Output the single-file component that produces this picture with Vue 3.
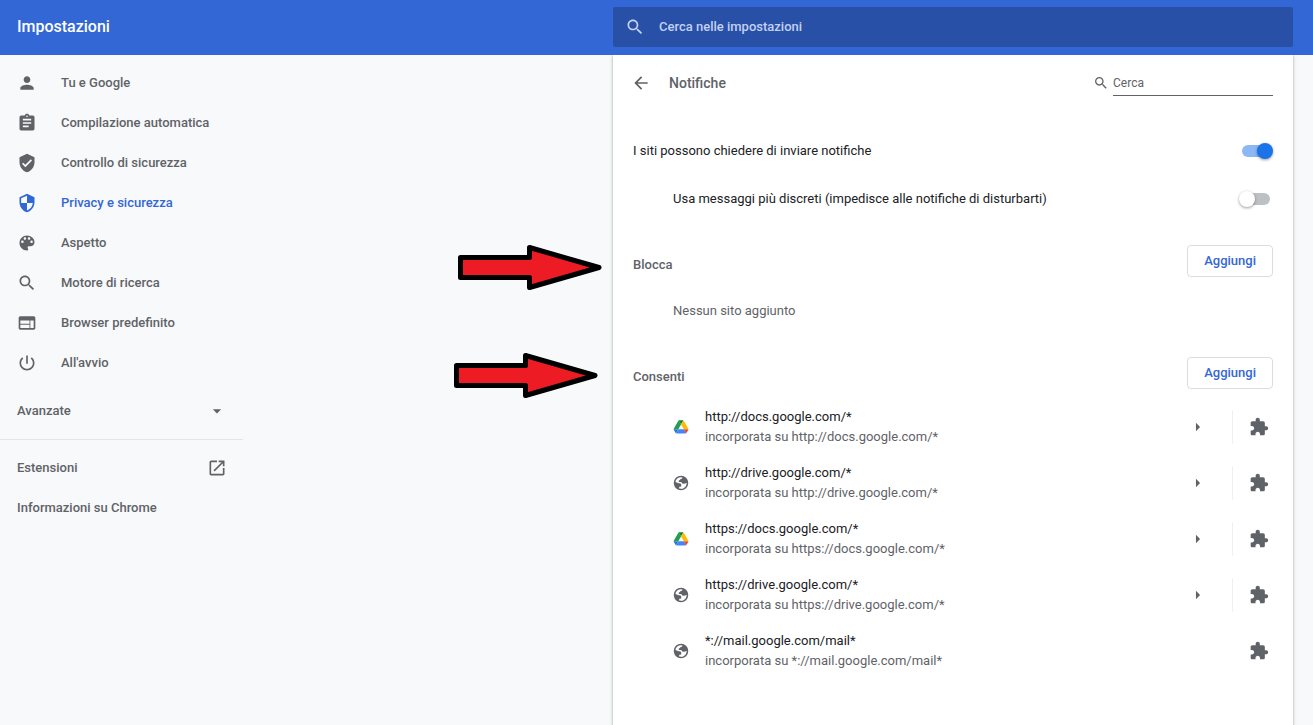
<script setup>
import { ref } from 'vue';

const icons = {
    person: 'M12 12c2.21 0 4-1.79 4-4s-1.79-4-4-4-4 1.79-4 4 1.79 4 4 4zm0 2c-2.67 0-8 1.34-8 4v2h16v-2c0-2.66-5.33-4-8-4z',
    assignment: 'M19 3h-4.18C14.4 1.84 13.3 1 12 1c-1.3 0-2.4.84-2.82 2H5c-1.1 0-2 .9-2 2v14c0 1.1.9 2 2 2h14c1.1 0 2-.9 2-2V5c0-1.1-.9-2-2-2zm-7 0c.55 0 1 .45 1 1s-.45 1-1 1-1-.45-1-1 .45-1 1-1zm2 14H7v-2h7v2zm3-4H7v-2h10v2zm0-4H7V7h10v2z',
    verified: 'M12 1L3 5v6c0 5.55 3.84 10.74 9 12 5.16-1.26 9-6.45 9-12V5l-9-4zm-2 16l-4-4 1.41-1.41L10 14.17l6.59-6.59L18 9l-8 8z',
    security: 'M12 1L3 5v6c0 5.55 3.84 10.74 9 12 5.16-1.26 9-6.45 9-12V5l-9-4zm0 10.99h7c-.53 4.12-3.28 7.79-7 8.94V12H5V6.3l7-3.11v8.8z',
    palette: 'M12 3c-4.97 0-9 4.03-9 9s4.03 9 9 9c.83 0 1.5-.67 1.5-1.5 0-.39-.15-.74-.39-1.01-.23-.26-.38-.61-.38-.99 0-.83.67-1.5 1.5-1.5H16c2.76 0 5-2.24 5-5 0-4.42-4.03-8-9-8zm-5.5 9c-.83 0-1.5-.67-1.5-1.5S5.67 9 6.5 9 8 9.67 8 10.5 7.33 12 6.5 12zm3-4C8.67 8 8 7.33 8 6.5S8.67 5 9.5 5s1.5.67 1.5 1.5S10.33 8 9.5 8zm5 0c-.83 0-1.5-.67-1.5-1.5S13.67 5 14.5 5s1.5.67 1.5 1.5S15.33 8 14.5 8zm3 4c-.83 0-1.5-.67-1.5-1.5S16.67 9 17.5 9s1.5.67 1.5 1.5-.67 1.5-1.5 1.5z',
    search: 'M15.5 14h-.79l-.28-.27C15.41 12.59 16 11.11 16 9.5 16 5.91 13.09 3 9.5 3S3 5.91 3 9.5 5.91 16 9.5 16c1.61 0 3.09-.59 4.23-1.57l.27.28v.79l5 4.99L20.49 19l-4.99-5zm-6 0C7.01 14 5 11.99 5 9.5S7.01 5 9.5 5 14 7.01 14 9.5 11.99 14 9.5 14z',
    web: 'M20 4H4c-1.1 0-1.99.9-1.99 2L2 18c0 1.1.9 2 2 2h16c1.1 0 2-.9 2-2V6c0-1.1-.9-2-2-2zm-5 14H4v-4h11v4zm0-5H4V9h11v4zm5 5h-4V9h4v9z',
    power: 'M13 3h-2v10h2V3zm4.83 2.17l-1.42 1.42C17.99 7.86 19 9.81 19 12c0 3.87-3.13 7-7 7s-7-3.13-7-7c0-2.19 1.01-4.14 2.58-5.42L6.17 5.17C4.23 6.82 3 9.26 3 12c0 4.97 4.03 9 9 9s9-4.03 9-9c0-2.74-1.23-5.18-3.17-6.83z',
    dropdown: 'M7 10l5 5 5-5z',
    right: 'M9.5 7l5 5-5 5z',
    launch: 'M19 19H5V5h7V3H5c-1.11 0-2 .9-2 2v14c0 1.1.89 2 2 2h14c1.1 0 2-.9 2-2v-7h-2v7zM14 3v2h3.59l-9.83 9.83 1.41 1.41L19 6.41V10h2V3h-7z',
    back: 'M20 11H7.83l5.59-5.59L12 4l-8 8 8 8 1.41-1.41L7.83 13H20v-2z',
    extension: 'M20.5 11H19V7c0-1.1-.9-2-2-2h-4V3.5C13 2.12 11.88 1 10.5 1S8 2.12 8 3.5V5H4c-1.1 0-1.99.9-1.99 2v3.8H3.5c1.49 0 2.7 1.21 2.7 2.7s-1.21 2.7-2.7 2.7H2V20c0 1.1.9 2 2 2h3.8v-1.5c0-1.49 1.21-2.7 2.7-2.7 1.49 0 2.7 1.21 2.7 2.7V22H17c1.1 0 2-.9 2-2v-4h1.5c1.38 0 2.5-1.12 2.5-2.5S21.88 11 20.5 11z',
    globe: 'M12 2a10 10 0 1 0 0 20a10 10 0 1 0 0-20zM4.200 10.500C5 6.500 8.200 4 12 4l2 .3c-.3 1.500-1.200 2-2.700 2.200-.3 1.200-.8 1.700-2.300 1.700v2.300c1.800 0 4.500-.2 5 2.500 2 .2 4.300-.2 5.700-1.500C20 16 16.500 20 12 20l-2.500-.4v-2.400c2 .2 3-.7 3-2.200 0-1.800-1.500-2.500-3.500-2.500z',
};

const menu = [
    { icon: 'person', label: 'Tu e Google' },
    { icon: 'assignment', label: 'Compilazione automatica' },
    { icon: 'verified', label: 'Controllo di sicurezza' },
    { icon: 'security', label: 'Privacy e sicurezza', active: true },
    { icon: 'palette', label: 'Aspetto' },
    { icon: 'search', label: 'Motore di ricerca' },
    { icon: 'web', label: 'Browser predefinito' },
    { icon: 'power', label: "All'avvio" },
];

const siti = [
    { url: 'http://docs.google.com/*', drive: true, dettagli: true },
    { url: 'http://drive.google.com/*', drive: false, dettagli: true },
    { url: 'https://docs.google.com/*', drive: true, dettagli: true },
    { url: 'https://drive.google.com/*', drive: false, dettagli: true },
    { url: '*://mail.google.com/mail*', drive: false, dettagli: false },
];

const ricerca = ref('');
const ricercaSiti = ref('');
const chiedi = ref(true);
const discreti = ref(false);
</script>

<template>
    <div class="page">
        <header class="toolbar">
            <h1>Impostazioni</h1>
            <label class="toolbar-search">
                <svg class="icon" viewBox="0 0 24 24"><path :d="icons.search" /></svg>
                <input v-model="ricerca" type="text" placeholder="Cerca nelle impostazioni" />
            </label>
        </header>

        <div class="content">
            <div class="left">
                <nav class="menu">
                    <a v-for="voce in menu" :key="voce.label" href="#" class="item" :class="{ active: voce.active }">
                        <svg class="icon" viewBox="0 0 24 24"><path :d="icons[voce.icon]" /></svg>
                        <span>{{ voce.label }}</span>
                    </a>
                    <button class="item advanced">
                        <span>Avanzate</span>
                        <svg class="icon" viewBox="0 0 24 24"><path :d="icons.dropdown" /></svg>
                    </button>
                    <hr />
                    <a href="#" class="item between">
                        <span>Estensioni</span>
                        <svg class="icon" viewBox="0 0 24 24"><path :d="icons.launch" /></svg>
                    </a>
                    <a href="#" class="item">Informazioni su Chrome</a>
                </nav>
            </div>

            <main class="card">
                <div class="title-row">
                    <button class="icon-button" aria-label="Indietro">
                        <svg class="icon" viewBox="0 0 24 24"><path :d="icons.back" /></svg>
                    </button>
                    <h2>Notifiche</h2>
                    <label class="site-search">
                        <svg class="icon small" viewBox="0 0 24 24"><path :d="icons.search" /></svg>
                        <input v-model="ricercaSiti" type="text" placeholder="Cerca" />
                    </label>
                </div>

                <label class="toggle-row">
                    <span>I siti possono chiedere di inviare notifiche</span>
                    <input v-model="chiedi" class="toggle" type="checkbox" />
                </label>
                <label class="toggle-row nested">
                    <span>Usa messaggi più discreti (impedisce alle notifiche di disturbarti)</span>
                    <input v-model="discreti" class="toggle" type="checkbox" />
                </label>

                <section>
                    <div class="section-head">
                        <h2>Blocca</h2>
                        <button class="add">Aggiungi</button>
                    </div>
                    <p class="empty">Nessun sito aggiunto</p>
                </section>

                <section>
                    <div class="section-head">
                        <h2>Consenti</h2>
                        <button class="add">Aggiungi</button>
                    </div>
                    <ul>
                        <li v-for="sito in siti" :key="sito.url">
                            <svg v-if="sito.drive" class="favicon" viewBox="-4 -4 95 95">
                                <g transform="translate(0 4)">
                                    <path fill="#2f6fdd" d="m6.600 66.850 3.850 6.650c.8 1.400 1.950 2.500 3.300 3.300l13.750-23.800h-27.500c0 1.550.4 3.100 1.200 4.500z" />
                                    <path fill="#1fa34a" d="m43.650 25-13.750-23.800c-1.350.8-2.500 1.900-3.300 3.300l-25.400 44a9.060 9.060 0 0 0 -1.200 4.500h27.500z" />
                                    <path fill="#ea4335" d="m73.550 76.800c1.350-.8 2.500-1.900 3.300-3.300l1.600-2.750 7.650-13.250c.8-1.400 1.200-2.950 1.200-4.500h-27.500l5.850 11.500z" />
                                    <path fill="#188038" d="m43.650 25 13.750-23.800c-1.350-.8-2.900-1.200-4.500-1.200h-18.500c-1.600 0-3.150.45-4.500 1.200z" />
                                    <path fill="#4285f4" d="m59.800 53h-32.300l-13.750 23.800c1.350.8 2.900 1.200 4.500 1.200h50.800c1.600 0 3.150-.45 4.500-1.200z" />
                                    <path fill="#fbbc04" d="m73.400 26.500-12.700-22c-.8-1.400-1.950-2.500-3.300-3.300l-13.750 23.800 16.150 28h27.450c0-1.550-.4-3.100-1.200-4.500z" />
                                </g>
                            </svg>
                            <svg v-else class="favicon" viewBox="1 1 22 22"><path fill-rule="evenodd" :d="icons.globe" /></svg>
                            <div class="site">
                                <div>{{ sito.url }}</div>
                                <div class="secondary">incorporata su {{ sito.url }}</div>
                            </div>
                            <button v-if="sito.dettagli" class="icon-button" aria-label="Dettagli">
                                <svg class="icon" viewBox="0 0 24 24"><path :d="icons.right" /></svg>
                            </button>
                            <span class="extension" :class="{ divided: sito.dettagli }">
                                <svg class="icon" viewBox="0 0 24 24"><path :d="icons.extension" /></svg>
                            </span>
                        </li>
                    </ul>
                </section>

                <!-- frecce rosse sopra la pagina -->
                <svg class="arrow arrow-block" viewBox="0 0 144 46"><path d="M2.500 12.500H71.500V2.500L141 22.500L71.500 42.500V32.500H2.500z" /></svg>
                <svg class="arrow arrow-allow" viewBox="0 0 144 46"><path d="M2.500 12.500H71.500V2.500L141 22.500L71.500 42.500V32.500H2.500z" /></svg>
            </main>
        </div>
    </div>
</template>

<style>
body {
    background: #f8f9fa;
}
</style>

<style scoped>
* {
    box-sizing: border-box;
}

.page {
    display: flex;
    flex-direction: column;
    min-height: 100vh;
    font-family: Roboto, "Liberation Sans", sans-serif;
    font-size: 13px;
    line-height: 20px;
    color: #202124;
    background: #f8f9fa;
}

h1,
h2,
p,
ul {
    margin: 0;
    padding: 0;
}

button,
input {
    font: inherit;
    color: inherit;
    background: none;
    border: none;
    padding: 0;
    margin: 0;
    outline: none;
}

button {
    cursor: pointer;
}

.icon {
    display: block;
    width: 20px;
    height: 20px;
    flex: none;
    fill: currentColor;
}

.icon.small {
    width: 16px;
    height: 16px;
}

.toolbar {
    display: flex;
    align-items: center;
    justify-content: space-between;
    padding: 7px 20px 8px 17px;
    background: #3367d6;
    color: #fff;
    position: relative;
    z-index: 1;
}

.toolbar h1 {
    font-size: 16px;
    font-weight: 500;
}

.toolbar-search {
    display: flex;
    align-items: center;
    gap: 14px;
    width: 100%;
    max-width: 680px;
    height: 40px;
    padding: 0 12px;
    border-radius: 2px;
    background: #2850a7;
    color: #c2d1f2;
}

.toolbar-search input {
    flex: 1;
    font-weight: 500;
}

input::placeholder {
    color: inherit;
    opacity: 1;
}

.content {
    display: flex;
    flex: 1;
    padding-right: 20px;
}

.left {
    flex: 1;
    min-width: 243px;
}

.menu {
    width: 243px;
    padding: 8px 0;
}

.item {
    display: flex;
    align-items: center;
    gap: 24px;
    width: 100%;
    height: 40px;
    padding: 0 16px 0 17px;
    color: #5f6368;
    font-weight: 500;
    text-decoration: none;
}

.item.active {
    color: #3367d6;
}

.item.advanced,
.item.between {
    justify-content: space-between;
}

.item.advanced {
    margin: 8px 0;
}

hr {
    margin: 0 0 8px;
    border: none;
    border-top: 1px solid #e3e5e8;
}

.card {
    position: relative;
    width: 100%;
    max-width: 680px;
    padding: 0 20px 24px;
    background: #fff;
    box-shadow: 0 1px 2px rgba(60, 64, 67, 0.3), 0 1px 3px 1px rgba(60, 64, 67, 0.15);
}

h2 {
    font-size: 13px;
    font-weight: 500;
    color: #5f6368;
}

.title-row {
    display: flex;
    align-items: center;
    height: 56px;
    margin-bottom: 16px;
    color: #5f6368;
}

.title-row h2 {
    flex: 1;
    margin-left: 18px;
    font-size: 14px;
}

.title-row .icon-button {
    margin-left: -2px;
}

.icon-button {
    color: #5f6368;
}

.site-search {
    display: flex;
    align-items: center;
    gap: 4px;
    font-size: 12px;
}

.site-search input {
    width: 160px;
    height: 26px;
    border-bottom: 1px solid #5f6368;
}

.toggle-row {
    display: flex;
    align-items: center;
    justify-content: space-between;
    height: 48px;
}

.toggle-row.nested {
    padding-left: 40px;
}

.toggle {
    position: relative;
    appearance: none;
    width: 34px;
    height: 16px;
}

.toggle::before {
    content: '';
    position: absolute;
    top: 2px;
    left: 3px;
    width: 28px;
    height: 12px;
    border-radius: 6px;
    background: #bdc1c6;
}

.toggle::after {
    content: '';
    position: absolute;
    top: 0;
    left: 0;
    width: 16px;
    height: 16px;
    border-radius: 50%;
    background: #fff;
    box-shadow: 0 1px 3px rgba(0, 0, 0, 0.4);
}

.toggle:checked::before {
    background: #8cb8f4;
}

.toggle:checked::after {
    left: 18px;
    background: #1a73e8;
}

section {
    padding-top: 22px;
}

.section-head {
    display: flex;
    align-items: center;
    justify-content: space-between;
    margin-bottom: 10px;
}

.section-head h2 {
    padding-top: 8px;
}

.add {
    height: 32px;
    padding: 0 16px;
    border: 1px solid #dadce0;
    border-radius: 4px;
    color: #3367d6;
    font-weight: 500;
}

.empty {
    padding: 14px 0 14px 40px;
    color: #5f6368;
}

ul {
    list-style: none;
}

li {
    display: flex;
    align-items: center;
    height: 56px;
    padding-left: 40px;
}

.favicon {
    flex: none;
    width: 16px;
    height: 16px;
    margin-right: 16px;
    fill: #5f6368;
}

.site {
    flex: 1;
}

.secondary {
    color: #5f6368;
}

.extension {
    display: flex;
    align-items: center;
    height: 34px;
    margin-left: 24px;
    padding: 0 4px 0 16px;
    color: #5f6368;
}

.extension.divided {
    border-left: 1px solid #eff0f2;
}

.arrow {
    position: absolute;
    width: 144px;
    height: 46px;
    fill: #ed1c24;
    stroke: #000;
    stroke-width: 5;
    stroke-linejoin: round;
}

.arrow-block {
    top: 190px;
    right: calc(100% + 11px);
}

.arrow-allow {
    top: 298px;
    right: calc(100% + 15px);
}
</style>
